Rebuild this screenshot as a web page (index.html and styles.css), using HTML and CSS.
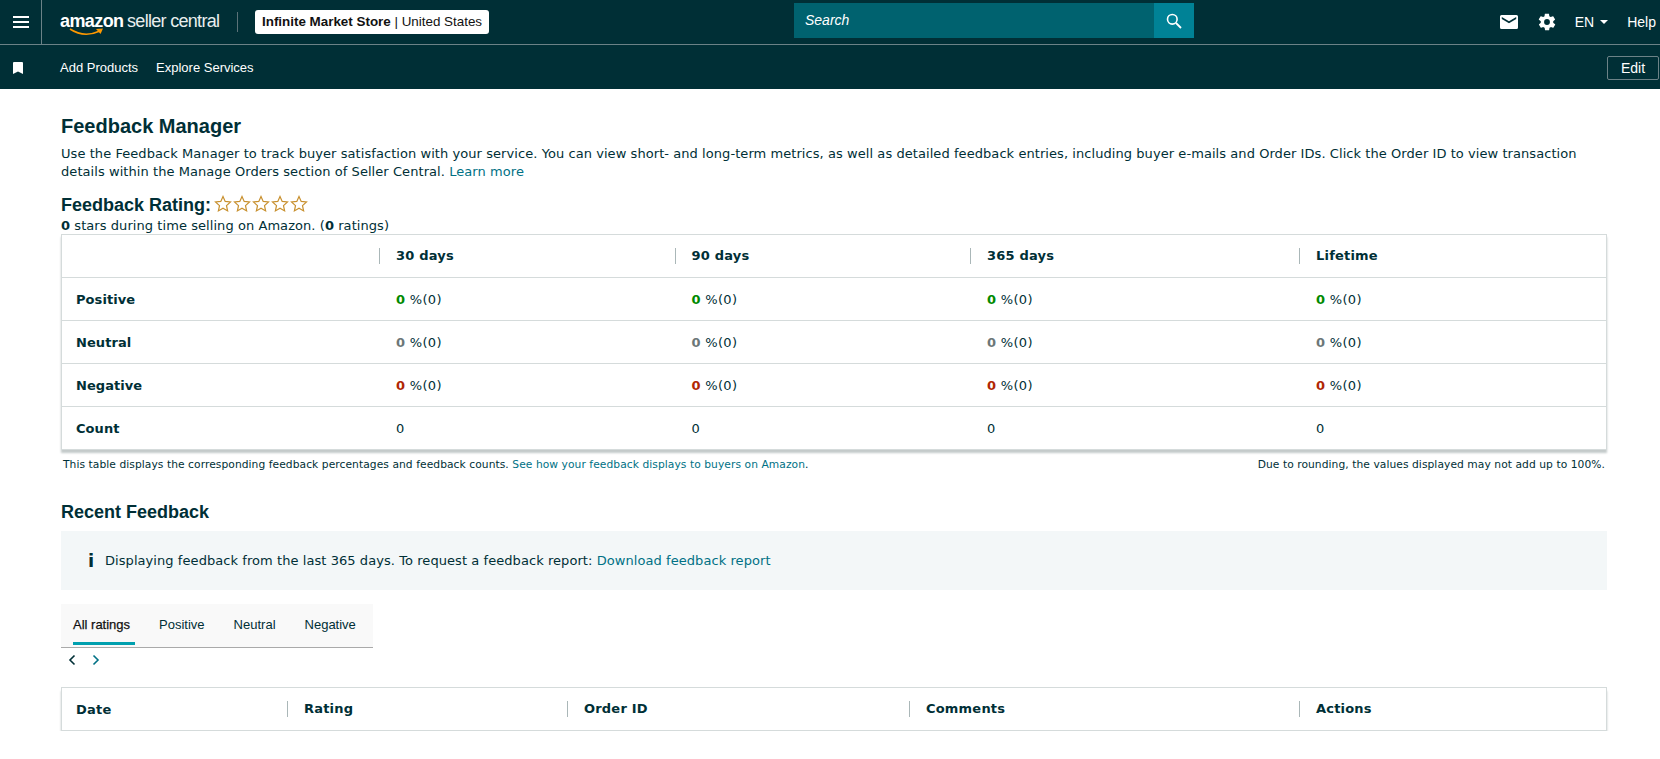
FILE: index.html
```html
<!DOCTYPE html>
<html lang="en">
<head>
    <meta charset="UTF-8">
    <meta name="viewport" content="width=device-width, initial-scale=1.0">
    <title>Feedback Manager</title>
    <link rel="stylesheet" href="styles.css">
</head>
<body>

    <header class="barra">
        <div class="barra-alta">
            <div class="menu-cella">
                <svg width="16" height="12" viewBox="0 0 16 12"><path d="M0 1h16M0 6h16M0 11h16" stroke="#fff" stroke-width="2"/></svg>
            </div>
            <div class="logo">
                <span class="logo-amazon">amazon</span>
                <span class="logo-seller">seller central</span>
                <svg class="logo-freccia" width="36" height="8" viewBox="0 0 36 8"><path d="M1 1c9 6 20 6.500 30 2" fill="none" stroke="#f90" stroke-width="1.600"/><path d="M27 1l7-.5-2.500 5.500z" fill="#f90"/></svg>
            </div>
            <div class="separatore"></div>
            <div class="negozio"><b>Infinite Market Store</b> | United States</div>
            <div class="ricerca">
                <div class="ricerca-campo">Search</div>
                <div class="ricerca-bottone">
                    <svg width="16" height="16" viewBox="0 0 16 16"><circle cx="6.300" cy="6.300" r="4.800" fill="none" stroke="#fff" stroke-width="1.600"/><path d="M10 10l5 5" stroke="#fff" stroke-width="1.800"/></svg>
                </div>
            </div>
            <div class="barra-destra">
                <svg width="18" height="14" viewBox="0 0 18 14"><path d="M1.500 0h15A1.500 1.500 0 0 1 18 1.500v11a1.500 1.500 0 0 1-1.500 1.500h-15A1.500 1.500 0 0 1 0 12.500v-11A1.500 1.500 0 0 1 1.500 0zM9 6.200 1.800 2v2L9 8.200 16.200 4V2z" fill="#fff" fill-rule="evenodd"/></svg>
                <svg class="ingranaggio" width="20" height="20" viewBox="0 0 24 24"><path d="M19.400 13c.1-.3.100-.7.100-1s0-.7-.1-1l2.100-1.600c.2-.2.200-.4.100-.6l-2-3.500c-.1-.2-.4-.3-.6-.2l-2.500 1c-.5-.4-1.100-.7-1.700-1l-.4-2.600c0-.3-.2-.4-.5-.4h-4c-.3 0-.5.100-.5.400l-.4 2.600c-.6.300-1.200.6-1.700 1l-2.500-1c-.2-.1-.5 0-.6.200l-2 3.500c-.1.200-.1.400.1.600L4.600 11c-.1.300-.1.700-.1 1s0 .7.100 1l-2.100 1.600c-.2.200-.2.400-.1.600l2 3.500c.1.200.4.300.6.200l2.500-1c.5.400 1.100.7 1.700 1l.4 2.600c0 .3.200.4.500.4h4c.3 0 .5-.1.500-.4l.4-2.600c.6-.3 1.200-.6 1.700-1l2.500 1c.2.100.5 0 .6-.2l2-3.500c.1-.2.100-.4-.1-.6zM12 15.500a3.500 3.500 0 1 1 0-7 3.500 3.500 0 0 1 0 7z" fill="#fff"/></svg>
                <span class="lingua">EN<i class="triangolo"></i></span>
                <span class="aiuto">Help</span>
            </div>
        </div>
        <nav class="barra-bassa">
            <svg class="segnalibro" width="10" height="12" viewBox="0 0 10 12"><path d="M1 0h8a1 1 0 0 1 1 1v11L5 9.500 0 12V1a1 1 0 0 1 1-1z" fill="#fff"/></svg>
            <a class="voce">Add Products</a>
            <a class="voce">Explore Services</a>
            <button class="bottone-edit" type="button">Edit</button>
        </nav>
    </header>

    <main class="contenuto">
        <h1>Feedback Manager</h1>
        <p class="intro">Use the Feedback Manager to track buyer satisfaction with your service. You can view short- and long-term metrics, as well as detailed feedback entries, including buyer e-mails and Order IDs. Click the Order ID to view transaction details within the Manage Orders section of Seller Central. <a class="link">Learn more</a></p>

        <div class="valutazione">
            <h2>Feedback Rating:</h2>
            <div class="stelle">
                <svg width="18" height="18" viewBox="0 0 18 18"><path class="stella" d="M9 1.500l2.200 4.900 5.300.6-4 3.600 1.100 5.300L9 13.200l-4.600 2.700 1.100-5.300-4-3.600 5.300-.6z"/></svg>
                <svg width="18" height="18" viewBox="0 0 18 18"><path class="stella" d="M9 1.500l2.200 4.900 5.300.6-4 3.600 1.100 5.300L9 13.200l-4.600 2.700 1.100-5.300-4-3.600 5.300-.6z"/></svg>
                <svg width="18" height="18" viewBox="0 0 18 18"><path class="stella" d="M9 1.500l2.200 4.900 5.300.6-4 3.600 1.100 5.300L9 13.200l-4.600 2.700 1.100-5.300-4-3.600 5.300-.6z"/></svg>
                <svg width="18" height="18" viewBox="0 0 18 18"><path class="stella" d="M9 1.500l2.200 4.900 5.300.6-4 3.600 1.100 5.300L9 13.200l-4.600 2.700 1.100-5.300-4-3.600 5.300-.6z"/></svg>
                <svg width="18" height="18" viewBox="0 0 18 18"><path class="stella" d="M9 1.500l2.200 4.900 5.300.6-4 3.600 1.100 5.300L9 13.200l-4.600 2.700 1.100-5.300-4-3.600 5.300-.6z"/></svg>
            </div>
        </div>
        <p class="riassunto"><b>0</b> stars during time selling on Amazon. (<b>0</b> ratings)</p>

        <div class="riquadro">
            <table class="tabella">
                <colgroup>
                    <col class="col-etichetta"><col class="col-periodo"><col class="col-periodo"><col class="col-anno"><col>
                </colgroup>
                <thead>
                    <tr>
                        <th></th>
                        <th><span class="intestazione">30 days</span></th>
                        <th><span class="intestazione">90 days</span></th>
                        <th><span class="intestazione">365 days</span></th>
                        <th><span class="intestazione">Lifetime</span></th>
                    </tr>
                </thead>
                <tbody>
                    <tr>
                        <td class="etichetta">Positive</td>
                        <td><b class="verde">0</b> %(0)</td>
                        <td><b class="verde">0</b> %(0)</td>
                        <td><b class="verde">0</b> %(0)</td>
                        <td><b class="verde">0</b> %(0)</td>
                    </tr>
                    <tr>
                        <td class="etichetta">Neutral</td>
                        <td><b class="grigio">0</b> %(0)</td>
                        <td><b class="grigio">0</b> %(0)</td>
                        <td><b class="grigio">0</b> %(0)</td>
                        <td><b class="grigio">0</b> %(0)</td>
                    </tr>
                    <tr>
                        <td class="etichetta">Negative</td>
                        <td><b class="rosso">0</b> %(0)</td>
                        <td><b class="rosso">0</b> %(0)</td>
                        <td><b class="rosso">0</b> %(0)</td>
                        <td><b class="rosso">0</b> %(0)</td>
                    </tr>
                    <tr>
                        <td class="etichetta">Count</td>
                        <td>0</td>
                        <td>0</td>
                        <td>0</td>
                        <td>0</td>
                    </tr>
                </tbody>
            </table>
        </div>

        <div class="note">
            <span>This table displays the corresponding feedback percentages and feedback counts. <a class="link">See how your feedback displays to buyers on Amazon</a>.</span>
            <span>Due to rounding, the values displayed may not add up to 100%.</span>
        </div>

        <h2 class="titolo-recenti">Recent Feedback</h2>
        <div class="avviso">
            <span class="avviso-icona">i</span>
            <span>Displaying feedback from the last 365 days. To request a feedback report: <a class="link">Download feedback report</a></span>
        </div>

        <div class="schede">
            <span class="scheda scheda-attiva">All ratings</span>
            <span class="scheda">Positive</span>
            <span class="scheda">Neutral</span>
            <span class="scheda">Negative</span>
        </div>
        <div class="frecce">
            <svg width="8" height="12" viewBox="0 0 8 12"><path d="M6.500 1.500 2 6l4.500 4.500" fill="none" stroke="#002f36" stroke-width="1.600"/></svg>
            <svg width="8" height="12" viewBox="0 0 8 12"><path d="M1.500 1.500 6 6l-4.500 4.500" fill="none" stroke="#007185" stroke-width="1.600"/></svg>
        </div>

        <div class="riquadro riquadro-recenti">
            <table class="tabella">
                <colgroup>
                    <col class="col-data"><col class="col-voto"><col class="col-ordine"><col class="col-commenti"><col>
                </colgroup>
                <thead>
                    <tr>
                        <th>Date</th>
                        <th><span class="intestazione">Rating</span></th>
                        <th><span class="intestazione">Order ID</span></th>
                        <th><span class="intestazione">Comments</span></th>
                        <th><span class="intestazione">Actions</span></th>
                    </tr>
                </thead>
            </table>
        </div>
    </main>

</body>
</html>
```

FILE: styles.css
```css
* {
    box-sizing: border-box;
}

body {
    margin: 0;
    background-color: #fff;
    color: #002f36;
    font-family: "DejaVu Sans", Verdana, sans-serif;
    font-size: 13px;
    letter-spacing: 0.065px;
    overflow: hidden;
}

.barra {
    background-color: #002f36;
    color: #fff;
    font-family: "Liberation Sans", Arial, sans-serif;
    letter-spacing: 0;
}

.barra-alta {
    display: flex;
    align-items: center;
    height: 45px;
    border-bottom: 1px solid #6c8287;
}

.menu-cella {
    display: flex;
    align-items: center;
    justify-content: center;
    width: 42px;
    height: 44px;
    border-right: 1px solid #6c8287;
}

.logo {
    position: relative;
    margin-left: 18px;
    width: 160px;
    white-space: nowrap;
    line-height: 20px;
}

.logo-amazon {
    font-size: 18px;
    font-weight: bold;
    letter-spacing: -0.6px;
}

.logo-seller {
    font-size: 18px;
    font-weight: normal;
    letter-spacing: -0.7px;
    color: #e8eeee;
}

.logo-freccia {
    position: absolute;
    left: 9px;
    top: 17px;
}

.separatore {
    width: 1px;
    height: 20px;
    margin-left: 17px;
    background-color: #5b7278;
}

.negozio {
    margin-left: 17px;
    padding: 0 7px;
    height: 24px;
    line-height: 24px;
    background-color: #fff;
    color: #111;
    border-radius: 3px;
    font-size: 13.400px;
    white-space: nowrap;
}

.ricerca {
    display: flex;
    position: absolute;
    left: 794px;
    top: 3px;
    width: 400px;
    height: 35px;
}

.ricerca-campo {
    flex: 1;
    padding-left: 11px;
    line-height: 35px;
    background-color: #00626f;
    font-style: italic;
    font-size: 14px;
}

.ricerca-bottone {
    display: flex;
    align-items: center;
    justify-content: center;
    width: 40px;
    background-color: #008296;
}

.barra-destra {
    display: flex;
    align-items: center;
    margin-left: auto;
    padding-right: 4px;
    font-size: 14px;
}

.ingranaggio {
    margin-left: 19px;
}

.lingua {
    display: flex;
    align-items: center;
    margin-left: 18px;
}

.triangolo {
    margin-left: 6px;
    border-left: 4px solid transparent;
    border-right: 4px solid transparent;
    border-top: 4px solid #fff;
}

.aiuto {
    margin-left: 19px;
}

.barra-bassa {
    display: flex;
    align-items: center;
    height: 44px;
    padding-top: 1px;
    font-size: 13px;
}

.segnalibro {
    margin-left: 13px;
    margin-right: 37px;
}

.voce {
    margin-right: 18px;
}

.bottone-edit {
    margin-left: auto;
    margin-right: 1px;
    width: 52px;
    height: 24px;
    background: transparent;
    border: 1px solid #6c8287;
    border-radius: 2px;
    color: #fff;
    font-family: "Liberation Sans", Arial, sans-serif;
    font-size: 14px;
    padding: 0;
}

.contenuto {
    padding: 25px 53px 0 61px;
}

h1 {
    margin: 0;
    font-family: "Liberation Sans", Arial, sans-serif;
    font-size: 20px;
    line-height: 24px;
    font-weight: bold;
    letter-spacing: 0;
}

h2 {
    margin: 0;
    font-family: "Liberation Sans", Arial, sans-serif;
    font-size: 18px;
    line-height: 22px;
    font-weight: bold;
    letter-spacing: 0;
}

.intro {
    margin: 7px 0 0 0;
    line-height: 18px;
}

.link {
    color: #007185;
}

.valutazione {
    display: flex;
    align-items: center;
    margin-top: 13px;
    height: 22px;
}

.stelle {
    display: flex;
    gap: 1px;
    margin-left: 3px;
    margin-bottom: 3px;
}

.stella {
    fill: none;
    stroke: #c8902e;
    stroke-width: 1.200;
}

.riassunto {
    margin: 2px 0 0 0;
    line-height: 15px;
}

.riquadro {
    margin-top: 1px;
    background-color: #fff;
    border: 1px solid #d5dbdb;
    box-shadow: 0 3px 2px #c4caca;
}

.tabella {
    width: 100%;
    border-collapse: separate;
    border-spacing: 0;
    table-layout: fixed;
}

.col-etichetta {
    width: 317px;
}

.col-periodo {
    width: 295.500px;
}

.col-anno {
    width: 329px;
}

.tabella th,
.tabella td {
    padding: 0 0 0 14px;
    text-align: left;
    height: 43px;
    border-bottom: 1px solid #d5dbdb;
}

.tabella tbody tr:last-child td {
    height: 42px;
    border-bottom: none;
}

.tabella th {
    font-weight: bold;
    height: 43px;
    letter-spacing: 0.2px;
}

.tabella td:not(.etichetta) {
    padding-left: 17px;
    letter-spacing: 0.3px;
}

.intestazione {
    display: block;
    border-left: 1px solid #aab7b8;
    margin-left: -14px;
    padding-left: 16px;
    line-height: 16px;
}

.etichetta {
    font-weight: bold;
}

.verde {
    color: #008a00;
}

.grigio {
    color: #6c7778;
}

.rosso {
    color: #b12704;
}

.note {
    display: flex;
    justify-content: space-between;
    margin-top: 8px;
    padding: 0 2px;
    font-size: 10.700px;
    line-height: 14px;
}

.titolo-recenti {
    margin-top: 29px;
}

.avviso {
    display: flex;
    align-items: center;
    height: 59px;
    margin-top: 8px;
    padding-left: 27px;
    background-color: #f3f7f8;
}

.avviso-icona {
    width: 17px;
    font-size: 18px;
    font-weight: bold;
}

.schede {
    display: flex;
    width: 312px;
    height: 44px;
    margin-top: 14px;
    padding-left: 12px;
    background-color: #f9f9f9;
    border-bottom: 1px solid #aaa;
    font-family: "Liberation Sans", Arial, sans-serif;
    font-size: 13px;
    letter-spacing: 0;
    white-space: nowrap;
}

.scheda {
    margin-right: 29px;
    padding-top: 13px;
}

.scheda-attiva {
    height: 41px;
    margin-right: 24px;
    padding-right: 5px;
    border-bottom: 3px solid #00a0af;
    color: #111;
    -webkit-text-stroke: 0.25px #111;
}

.frecce {
    display: flex;
    gap: 16px;
    padding: 6px 0 0 7px;
    height: 27px;
}

.riquadro-recenti {
    margin-top: 12px;
    box-shadow: 0 4px 2px #c4caca;
}

.col-data {
    width: 225px;
}

.col-voto {
    width: 280px;
}

.col-ordine {
    width: 342px;
}

.col-commenti {
    width: 390px;
}

.riquadro-recenti .tabella th {
    height: 42px;
    border-bottom: none;
}
```
